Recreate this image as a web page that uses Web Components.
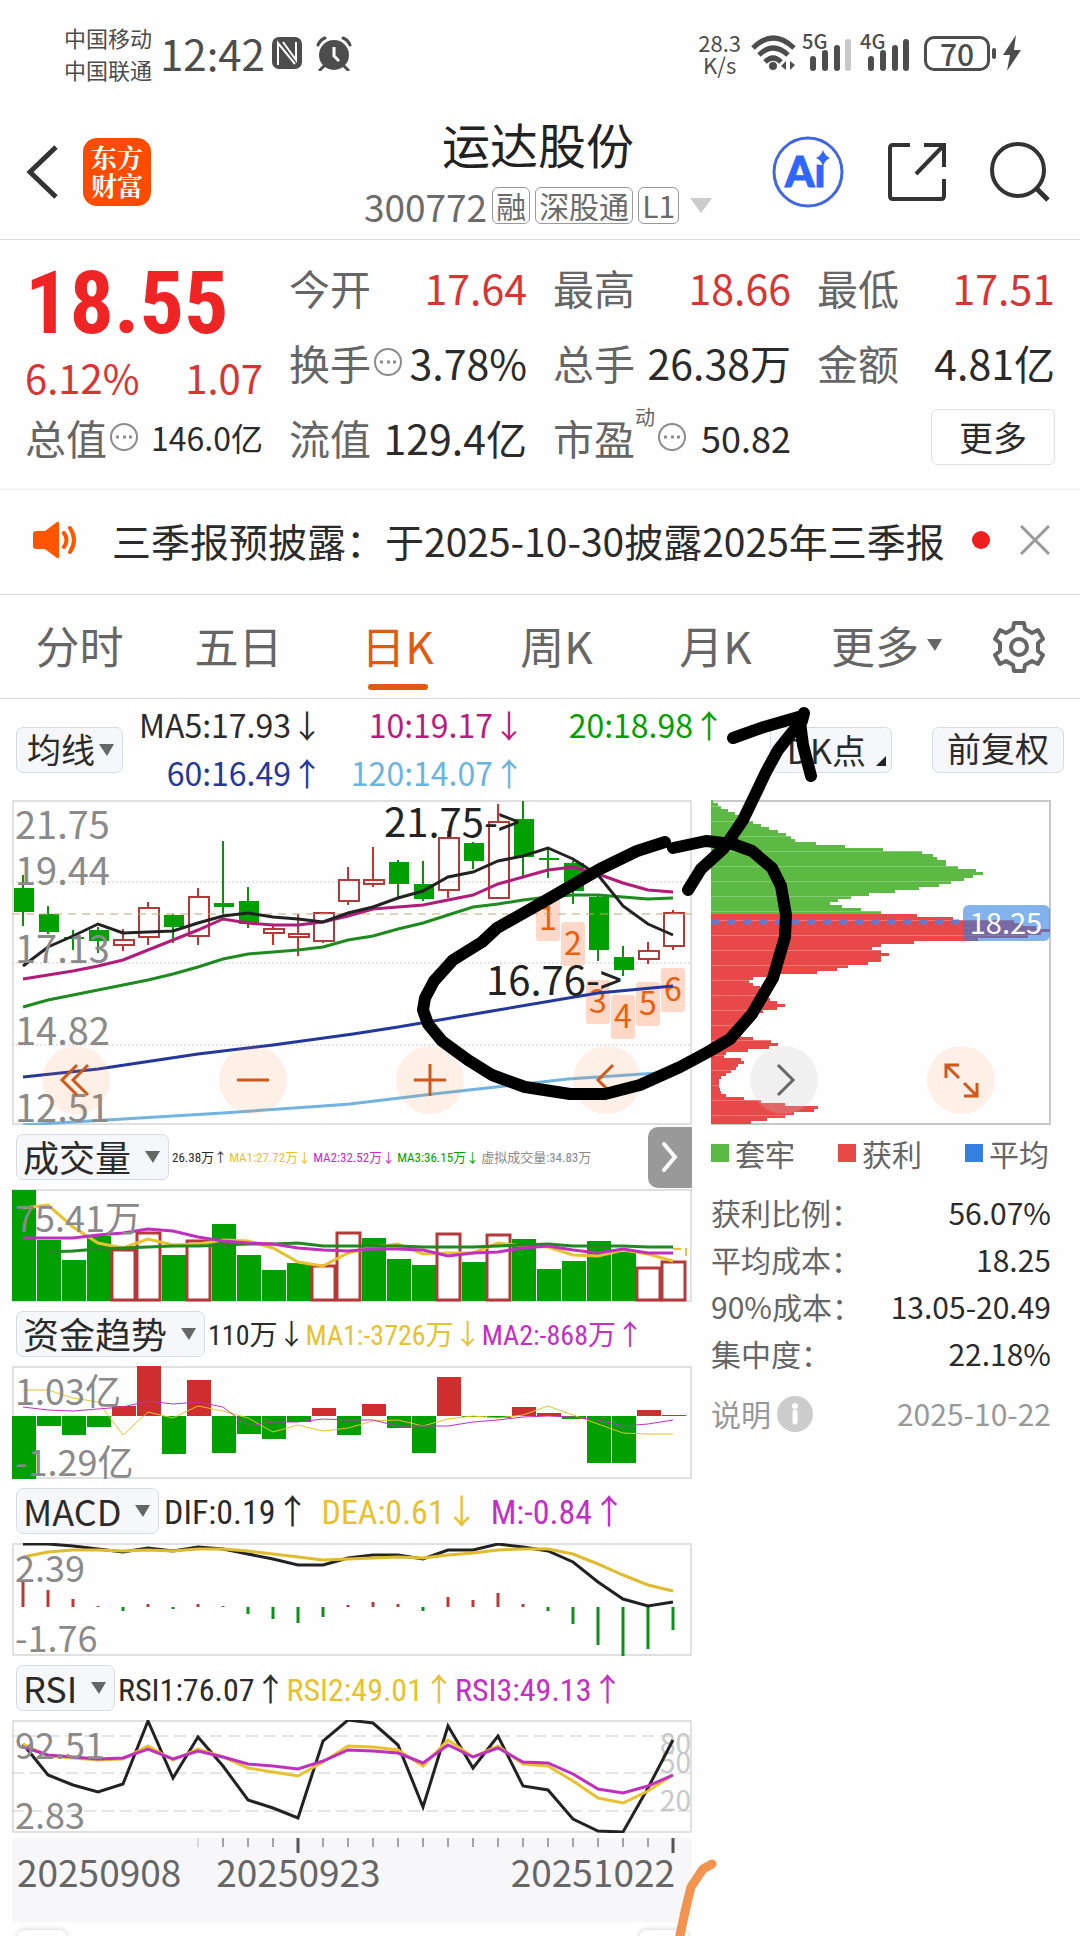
<!DOCTYPE html>
<html lang="zh-CN">
<head>
<meta charset="utf-8">
<meta name="viewport" content="width=device-width, initial-scale=1">
<title>运达股份 300772</title>
<style>
  :root {
    --ink: #2b2b2b;
    --muted: #666;
    --axis: #8a8a8a;
    --line: #d9dcde;
    --red: #d93434;
    --green: #00a000;
    --orange: #e25a10;
    --yellow: #e8c22e;
    --magenta: #c42fc4;
    --chip: #f6f7fa;
  }

  body {
    margin: 0;
    background: #fefefe;
    color: var(--ink);
    font-family: "Noto Sans CJK SC", "Noto Sans", sans-serif;
  }

  main {
    position: relative;
    overflow: hidden;
  }

  .charts {
    position: relative;
    display: grid;
    grid-template-columns: 2fr 1fr;
    column-gap: 19px;
    padding: 0 29px 0 12px;
    align-items: start;
  }
</style>
</head>
<body>
<main>
  <status-bar></status-bar>
  <stock-header></stock-header>
  <quote-panel></quote-panel>
  <notice-bar>三季报预披露：于2025-10-30披露2025年三季报</notice-bar>
  <period-tabs></period-tabs>
  <ma-toolbar></ma-toolbar>
  <div class="charts">
    <div>
      <kline-chart></kline-chart>
      <indicator-panel name="成交量" chart="volume" size="small" more>
        <param-value arrow="↑">26.38万</param-value>
        <param-value arrow="↓" color="yellow">MA1:27.72万</param-value>
        <param-value arrow="↓" color="magenta">MA2:32.52万</param-value>
        <param-value arrow="↓" color="green">MA3:36.15万</param-value>
        <param-value color="axis">虚拟成交量:34.83万</param-value>
      </indicator-panel>
      <indicator-panel name="资金趋势" chart="fund" size="medium">
        <param-value arrow="↓">110万</param-value>
        <param-value arrow="↓" color="yellow">MA1:-3726万</param-value>
        <param-value arrow="↑" color="magenta">MA2:-868万</param-value>
      </indicator-panel>
      <indicator-panel name="MACD" chart="macd" size="large">
        <param-value arrow="↑">DIF:0.19</param-value>
        <param-value arrow="↓" color="yellow">DEA:0.61</param-value>
        <param-value arrow="↑" color="magenta">M:-0.84</param-value>
      </indicator-panel>
      <indicator-panel name="RSI" chart="rsi">
        <param-value arrow="↑">RSI1:76.07</param-value>
        <param-value arrow="↑" color="yellow">RSI2:49.01</param-value>
        <param-value arrow="↑" color="magenta">RSI3:49.13</param-value>
      </indicator-panel>
      <time-axis></time-axis>
    </div>
    <chip-panel></chip-panel>
    <chart-controls></chart-controls>
  </div>
  <hand-sketch></hand-sketch>
</main>

<script>
  class View extends HTMLElement {
    connectedCallback() {
      if (!this.shadowRoot) this.attachShadow({ mode: 'open' });
      this.shadowRoot.innerHTML = this.render();
    }
  }

  // shared by every control that sits on a shadow root of its own
  const reset = `
    button, select {
      font: inherit;
      color: inherit;
      background: none;
      border: 0;
      padding: 0;
      margin: 0;
      appearance: none;
      cursor: pointer;
    }
    svg { display: block; flex: none; }
  `;

  // candle number n is centred on px(n) in a plot that is 680 wide
  const px = (n) => 11 + n * 25;
  const poly = (ys, color, width = 3, from = 0) =>
    `<polyline fill="none" stroke="${color}" stroke-width="${width}" points="${ys.map((y, i) => `${px(i + from)},${y}`).join(' ')}"/>`;
  const path = (pts, color, width = 3) =>
    `<polyline fill="none" stroke="${color}" stroke-width="${width}" points="${pts.map((p) => p.join()).join(' ')}"/>`;

  const GREEN = '#00a000';
  const RED = '#cf2e2e';
  const YELLOW = '#e8c22e';
  const MAGENTA = '#bf30bf';

  customElements.define('status-bar', class extends View {
    render() {
      const bars = (last) => [[0, 15], [12, 21], [24, 26], [35, 32]].map(([x, h], i) =>
        `<rect x="${8 + x}" y="${36 - h}" width="6" height="${h}" rx="3" fill="${i === 3 ? last : '#4d4d4d'}"/>`).join('');
      return `
        <style>
          ${reset}
          :host {
            display: flex;
            align-items: center;
            height: 106px;
            margin-bottom: 2px;
            box-sizing: border-box;
            padding: 0 59px 0 64px;
            color: #4d4d4d;
          }
          .carrier { font-size: 22px; line-height: 32px; }
          .time { font-size: 42px; line-height: 48px; margin: 0 7px 0 8px; }
          .nfc { margin-right: 14px; }
          .speed { margin-left: auto; text-align: center; font-size: 22px; line-height: 22px; margin-right: 10px; }
          .net { display: flex; margin-left: 6px; position: relative; }
          .net span { position: absolute; left: 0; top: -6px; font-size: 20px; line-height: 24px; font-weight: 500; }
          .battery {
            margin-left: 12px;
            width: 60px;
            border: 3px solid;
            border-radius: 10px;
            text-align: center;
            font-size: 30px;
            line-height: 29px;
            font-weight: 500;
          }
          .nub { width: 4px; height: 11px; margin: 0 7px 0 2px; border-radius: 2px; background: currentColor; }
        </style>
        <div class="carrier">中国移动<br>中国联通</div>
        <div class="time">12:42</div>
        <svg class="nfc" width="30" height="32" viewBox="0 0 30 32">
          <rect width="30" height="32" rx="7" fill="#4d4d4d"/>
          <path d="M6 28V6l17 21M11 5l13 18V5" fill="none" stroke="#fff" stroke-width="2"/>
        </svg>
        <svg width="36" height="35" viewBox="0 0 36 35">
          <circle cx="18" cy="19" r="15" fill="#4d4d4d"/>
          <path d="M18 11v9l5 5" fill="none" stroke="#fff" stroke-width="3"/>
          <path d="M2 9q2-5 7-7M34 9q-2-5-7-7M8 30l-4 4M28 30l4 4" fill="none" stroke="#4d4d4d" stroke-width="3" stroke-linecap="round"/>
        </svg>
        <div class="speed">28.3<br>K/s</div>
        <svg width="45" height="36" viewBox="0 0 45 36">
          <g fill="none" stroke="#4d4d4d" stroke-width="5">
            <path d="M2 13q20-20 41 0M8 20q14-14 29 0M14 27q8-8 16 0"/>
          </g>
          <circle cx="22" cy="31" r="4" fill="#4d4d4d"/>
          <path d="M30 31l5-5v9zM44 30l-5-4v9z" fill="#4d4d4d"/>
        </svg>
        <div class="net"><span>5G</span><svg width="52" height="36" viewBox="0 0 52 36">${bars('#c8c8c8')}</svg></div>
        <div class="net"><span>4G</span><svg width="52" height="36" viewBox="0 0 52 36">${bars('#4d4d4d')}</svg></div>
        <div class="battery">70</div>
        <div class="nub"></div>
        <svg width="18" height="36" viewBox="0 0 18 36"><path d="M13 0L0 20h7L4 36l14-21h-7z" fill="#4d4d4d"/></svg>
      `;
    }
  });

  customElements.define('stock-header', class extends View {
    render() {
      return `
        <style>
          ${reset}
          :host {
            display: grid;
            grid-template-columns: 1fr auto 1fr;
            align-items: center;
            height: 127px;
            padding: 0 30px 4px 26px;
            border-bottom: 1px solid var(--line);
          }
          .left, .right, .sub { display: flex; align-items: center; }
          .left { gap: 23px; }
          .right { justify-content: flex-end; gap: 44px; }
          .logo {
            width: 68px;
            height: 68px;
            box-sizing: border-box;
            padding-top: 5px;
            border-radius: 14px;
            background: #ff4b00;
            color: #fff;
            text-align: center;
            font-family: "Noto Serif CJK SC", "Noto Sans CJK SC", sans-serif;
            font-size: 26px;
            line-height: 28px;
            font-weight: 700;
          }
          h1 { margin: 0 0 10px; font-size: 48px; line-height: 60px; font-weight: 400; text-align: center; color: #222; }
          .sub { gap: 5px; font-size: 37px; line-height: 46px; margin-bottom: 2px; color: #6b6b6b; }
          .tag { border: 1px solid #999; border-radius: 6px; padding: 0 3px; font-size: 30px; line-height: 35px; }
          .sub svg { margin-left: 6px; }
        </style>
        <div class="left">
          <button aria-label="返回"><svg width="34" height="56" viewBox="0 0 34 56"><path d="M30 3L4 28l26 25" fill="none" stroke="#333" stroke-width="5"/></svg></button>
          <div class="logo">东方<br>财富</div>
        </div>
        <div>
          <h1>运达股份</h1>
          <div class="sub">
            <span>300772</span><span class="tag">融</span><span class="tag">深股通</span><span class="tag">L1</span>
            <svg width="22" height="15" viewBox="0 0 22 15"><path d="M0 0h22L11 15z" fill="#ccc"/></svg>
          </div>
        </div>
        <div class="right">
          <button aria-label="智能助手">
            <svg width="72" height="72" viewBox="0 0 72 72">
              <circle cx="36" cy="36" r="34" fill="none" stroke="#4066e0" stroke-width="3"/>
              <text x="13" y="51" font-family="Lato, sans-serif" font-size="42" font-weight="900" fill="#2f66ff" stroke="#2f66ff" stroke-width="1">Ai</text>
              <circle cx="50" cy="21" r="8" fill="#fefefe"/>
              <path d="M51 14q2 6 7 8q-5 2-7 8q-2-6-7-8q5-2 7-8z" fill="#2f66ff"/>
            </svg>
          </button>
          <button aria-label="分享">
            <svg width="58" height="58" viewBox="0 0 58 58"><path d="M22 2H5q-3 0-3 3v48q0 3 3 3h48q3 0 3-3V36M36 2h20v22M56 2L28 31" fill="none" stroke="#333" stroke-width="4"/></svg>
          </button>
          <button aria-label="搜索">
            <svg width="60" height="60" viewBox="0 0 60 60"><circle cx="28" cy="28" r="26" fill="none" stroke="#333" stroke-width="4"/><path d="M46 46l12 12" stroke="#333" stroke-width="5"/></svg>
          </button>
        </div>
      `;
    }
  });

  customElements.define('quote-item', class extends View {
    render() {
      const dots = this.hasAttribute('tip')
        ? '<svg width="30" height="30" viewBox="0 0 30 30"><circle cx="15" cy="15" r="13" fill="none" stroke="#8c8c8c" stroke-width="2"/><path d="M7 15h3M14 15h3M20 15h3" stroke="#8c8c8c" stroke-width="3"/></svg>'
        : '';
      const sup = this.getAttribute('sup');
      return `
        <style>
          ${reset}
          :host { display: flex; align-items: center; font-size: 41px; line-height: 60px; white-space: nowrap; }
          sup { font-size: 20px; line-height: 20px; color: var(--muted); align-self: flex-start; }
          svg { margin-left: 2px; }
          .label { color: var(--muted); }
          .value { margin-left: auto; }
          :host([red]) .value { color: var(--red); }
          :host([size="small"]) .value { font-size: 32px; }
          :host([size="mid"]) .value { font-size: 36px; }
        </style>
        <span class="label">${this.getAttribute('label')}</span>${sup ? `<sup>${sup}</sup>` : ''}${dots}
        <span class="value"><slot></slot></span>
      `;
    }
  });

  customElements.define('quote-panel', class extends View {
    render() {
      return `
        <style>
          ${reset}
          :host {
            display: grid;
            grid-template-columns: repeat(4, 1fr);
            grid-template-rows: repeat(3, 60px);
            gap: 15px 26px;
            padding: 17px 25px 22px;
            border-bottom: 1px solid #ececec;
          }
          .price { grid-row: 1 / 3; color: var(--red); }
          .price strong {
            display: block;
            padding-top: 6px;
            font-family: "Roboto Condensed", "Noto Sans CJK SC", sans-serif;
            font-size: 88px;
            line-height: 80px;
            color: #ef2525;
          }
          .price div { display: flex; justify-content: space-between; font-size: 40px; line-height: 68px; }
          .more {
            justify-self: end;
            align-self: center;
            width: 124px;
            height: 56px;
            border: 1px solid #e2e2e2;
            border-radius: 6px;
            font-size: 34px;
            line-height: 50px;
          }
        </style>
        <div class="price"><strong>18.55</strong><div><span>6.12%</span><span>1.07</span></div></div>
        <quote-item label="今开" red>17.64</quote-item>
        <quote-item label="最高" red>18.66</quote-item>
        <quote-item label="最低" red>17.51</quote-item>
        <quote-item label="换手" tip>3.78%</quote-item>
        <quote-item label="总手">26.38万</quote-item>
        <quote-item label="金额">4.81亿</quote-item>
        <quote-item label="总值" tip size="small">146.0亿</quote-item>
        <quote-item label="流值">129.4亿</quote-item>
        <quote-item label="市盈" sup="动" tip size="mid">50.82</quote-item>
        <button class="more">更多</button>
      `;
    }
  });

  customElements.define('notice-bar', class extends View {
    render() {
      return `
        <style>
          ${reset}
          :host {
            display: flex;
            align-items: center;
            height: 100px;
            padding: 0 30px 4px 33px;
            border-bottom: 1px solid var(--line);
            font-size: 39px;
            white-space: nowrap;
          }
          p { margin: 0 0 0 34px; }
          i { width: 18px; height: 18px; border-radius: 50%; background: #f01f1f; margin: 0 30px 0 auto; }
        </style>
        <svg width="45" height="38" viewBox="0 0 45 38">
          <path d="M3 10h9l12-9q2-1 2 1v34q0 2-2 1l-12-9H3q-3 0-3-3V13q0-3 3-3z" fill="#ff5500"/>
          <path d="M31 12q5 7 0 14M37 7q8 12 0 24" fill="none" stroke="#ff5500" stroke-width="4" stroke-linecap="round"/>
        </svg>
        <p><slot></slot></p>
        <i></i>
        <button aria-label="关闭"><svg width="30" height="30" viewBox="0 0 30 30"><path d="M1 1l28 28M29 1L1 29" stroke="#999" stroke-width="3"/></svg></button>
      `;
    }
  });

  customElements.define('period-tabs', class extends View {
    render() {
      const tabs = ['分时', '五日', '日K', '周K', '月K'];
      // six-toothed gear outline
      const gear = [];
      for (let t = 0; t < 6; t++) {
        for (const [d, r] of [[-18, 19], [-12, 25], [12, 25], [18, 19]]) {
          const a = (t * 60 + d - 90) * Math.PI / 180;
          gear.push(`${Math.round(27 + r * Math.cos(a))},${Math.round(27 + r * Math.sin(a))}`);
        }
      }
      return `
        <style>
          ${reset}
          :host {
            display: flex;
            height: 103px;
            padding-right: 20px;
            border-bottom: 1px solid var(--line);
            color: var(--muted);
            font-size: 44px;
          }
          button { flex: 159; display: flex; align-items: center; justify-content: center; position: relative; padding-bottom: 4px; }
          .on { color: var(--orange); }
          .on::after {
            content: "";
            position: absolute;
            bottom: 8px;
            width: 60px;
            height: 6px;
            border-radius: 3px;
            background: var(--orange);
          }
          .more { flex: 183; gap: 8px; }
          .set { flex: 82; padding: 0; }
        </style>
        ${tabs.map((t) => `<button class="${t === '日K' ? 'on' : ''}">${t}</button>`).join('')}
        <button class="more">更多<svg width="15" height="12" viewBox="0 0 15 12"><path d="M0 0h15L8 12z" fill="#666"/></svg></button>
        <button class="set" aria-label="设置">
          <svg width="54" height="54" viewBox="0 0 54 54" fill="none" stroke="#666" stroke-width="4" stroke-linejoin="round">
            <polygon points="${gear.join(' ')}"/><circle cx="27" cy="27" r="8"/>
          </svg>
        </button>
      `;
    }
  });

  customElements.define('drop-down', class extends View {
    render() {
      const name = this.getAttribute('name');
      return `
        <style>
          ${reset}
          :host { display: inline-block; }
          label {
            display: flex;
            align-items: center;
            height: 44px;
            padding: 0 8px 0 var(--drop-pad, 6px);
            border: 1px solid #d8dbe0;
            border-radius: 7px;
            background: var(--chip);
            gap: var(--drop-gap, 13px);
          }
          select { font-size: var(--drop-size, 36px); line-height: 42px; height: 44px; padding-bottom: 2px; outline: 0; }
        </style>
        <label><select aria-label="${name}"><option>${name}</option></select>
        <svg width="15" height="12" viewBox="0 0 15 12"><path d="M0 0h15L8 12z" fill="#666"/></svg></label>
      `;
    }
  });

  customElements.define('param-value', class extends View {
    render() {
      return `
        <style>
          :host { display: inline-block; color: var(--${this.getAttribute('color') || 'ink'}); white-space: nowrap; }
          i { font-family: "Noto Sans CJK SC", sans-serif; font-style: normal; }
        </style>
        <slot></slot><i>${this.getAttribute('arrow') || ''}</i>
      `;
    }
  });

  customElements.define('ma-toolbar', class extends View {
    render() {
      return `
        <style>
          ${reset}
          :host {
            --blue: #24379a;
            --sky: #6cb4e0;
            --pink: #bb1a80;
            display: flex;
            align-items: center;
            height: 101px;
            padding: 0 16px;
          }
          drop-down { --drop-size: 34px; --drop-gap: 4px; --drop-pad: 10px; }
          .values {
            display: grid;
            grid-template-columns: 184px 202px 200px;
            margin: 0 0 4px 16px;
            justify-items: end;
            font-size: 32px;
            line-height: 48px;
          }
          .btn {
            height: 46px;
            border: 1px solid #d8dbe0;
            border-radius: 7px;
            background: var(--chip);
            font-size: 34px;
            line-height: 40px;
            padding: 0 14px 4px;
          }
          .dk { display: flex; align-items: flex-end; margin-left: auto; gap: 10px; padding: 0 5px 2px 16px; }
          .dk svg { margin-bottom: 4px; }
          .fq { margin-left: 40px; }
        </style>
        <drop-down name="均线"></drop-down>
        <div class="values">
          <param-value arrow="↓">MA5:17.93</param-value>
          <param-value arrow="↓" color="pink">10:19.17</param-value>
          <param-value arrow="↑" color="green">20:18.98</param-value>
          <param-value arrow="↑" color="blue">60:16.49</param-value>
          <param-value arrow="↑" color="sky">120:14.07</param-value>
        </div>
        <button class="btn dk">DK点<svg width="10" height="10" viewBox="0 0 10 10"><path d="M10 0v10H0z" fill="#222"/></svg></button>
        <button class="btn fq">前复权</button>
      `;
    }
  });

  const plotStyle = `
    :host { display: block; }
    svg { display: block; width: 100%; height: auto; }
    text { font-family: "Noto Sans CJK SC", "Noto Sans", sans-serif; }
    .axis { fill: #8a8a8a; font-size: 36px; }
  `;

  customElements.define('kline-chart', class extends View {
    // colour, high, body top, body bottom, low
    candles = [
      ['g', 75, 88, 112, 126], ['g', 106, 114, 132, 134], ['g', 130, 137, 139, 150], ['g', 127, 130, 141, 153],
      ['r', 129, 140, 145, 151], ['r', 102, 108, 137, 145], ['g', 114, 115, 127, 143], ['r', 88, 97, 136, 145],
      ['g', 41, 103, 107, 116], ['g', 87, 101, 124, 128], ['r', 125, 129, 133, 145], ['r', 114, 134, 137, 156],
      ['r', 112, 113, 141, 143], ['r', 67, 80, 101, 105], ['r', 47, 80, 84, 87], ['g', 60, 62, 84, 97],
      ['g', 61, 84, 99, 101], ['r', 31, 38, 90, 98], ['g', 42, 43, 61, 69], ['r', 4, 22, 98, 98],
      ['g', 1, 19, 57, 76], ['g', 48, 58, 60, 78], ['g', 61, 63, 91, 104], ['g', 95, 97, 150, 161],
      ['g', 146, 157, 170, 176], ['r', 142, 151, 159, 164], ['r', 110, 113, 146, 150],
    ];

    marks = [[524, 97], [549, 122], [574, 180], [599, 195], [624, 182], [649, 168]];

    candle([c, hi, top, bottom, lo], i) {
      const x = px(i);
      if (c === 'g') {
        return `<path d="M${x} ${hi}V${lo}" stroke="#0a930a" stroke-width="2"/><rect x="${x - 9}" y="${top}" width="20" height="${bottom - top}" fill="${GREEN}"/>`;
      }
      return `<path d="M${x} ${hi}V${top}M${x} ${bottom}V${lo}" stroke="${RED}" stroke-width="2"/><rect x="${x - 9}" y="${top}" width="20" height="${bottom - top}" fill="none" stroke="#b23a3a" stroke-width="2"/>`;
    }

    render() {
      return `
        <style>
          ${plotStyle}
          .axis { font-size: 38px; }
          .note { fill: #222; font-size: 40px; }
          .mark { fill: #e8600f; font-size: 32px; text-anchor: middle; }
        </style>
        <svg viewBox="0 0 680 325">
          <rect x="1" y="1" width="678" height="323" fill="none" stroke="#e0e0e0" stroke-width="2"/>
          <path d="M0 82H680M0 163H680M0 245H680" stroke="#ccc" stroke-dasharray="2 2"/>
          ${this.marks.map(([x, y], i) => `<rect x="${x}" y="${y}" width="24" height="44" rx="3" fill="#ffd8c8"/><text class="mark" x="${x + 12}" y="${y + 33}">${i + 1}</text>`).join('')}
          ${this.candles.map((c, i) => this.candle(c, i)).join('')}
          <path d="M0 114H680" stroke="#c0a878" stroke-dasharray="8 6"/>
          ${path([[11, 277], [86, 269], [186, 254], [261, 245], [341, 234], [386, 227], [486, 210], [586, 193], [661, 186]], '#24379a')}
          ${path([[11, 325], [111, 319], [211, 313], [311, 306], [338, 304], [421, 294], [493, 286], [556, 279], [661, 272]], '#72b4de')}
          ${poly([207, 200, 195, 190, 185, 180, 174, 167, 159, 154, 152, 150, 147, 140, 136, 129, 123, 115, 107, 104, 100, 97, 95, 95, 97, 99, 98], '#1f8a1f')}
          ${poly([179, 175, 171, 166, 160, 150, 140, 130, 119, 123, 125, 125, 122, 116, 109, 107, 105, 100, 95, 84, 77, 70, 67, 74, 83, 90, 92], '#b01c78')}
          ${poly([166, 147, 136, 124, 133, 132, 131, 123, 116, 113, 117, 119, 122, 113, 107, 98, 91, 77, 72, 61, 56, 48, 59, 75, 106, 124, 135], '#222')}
          <text class="axis" x="3" y="39">21.75</text>
          <text class="axis" x="3" y="85">19.44</text>
          <text class="axis" x="3" y="163">17.13</text>
          <text class="axis" x="3" y="245">14.82</text>
          <text class="axis" x="3" y="322">12.51</text>
          <text class="note" x="372" y="37">21.75-&gt;</text>
          <text class="note" x="474" y="195">16.76-&gt;</text>
        </svg>
      `;
    }
  });

  const charts = {
    volume() {
      const bars = ['g1', 'g51', 'g71', 'g47', 'r61', 'r44', 'g66', 'r52', 'g35', 'g66', 'g81', 'g74', 'r77', 'r44',
        'g49', 'g70', 'g76', 'r45', 'g73', 'r46', 'g50', 'g80', 'g72', 'g52', 'g63', 'r79', 'r73'];
      return `
        ${bars.map((b, i) => {
          const y = +b.slice(1);
          return b[0] === 'g'
            ? `<rect x="${i * 25}" y="${y}" width="24" height="${112 - y}" fill="${GREEN}"/>`
            : `<rect x="${i * 25}" y="${y}" width="23" height="${111 - y}" fill="#fff" stroke="#b23a3a" stroke-width="3"/>`;
        }).join('')}
        ${poly([19, 16, 38, 54, 59, 50, 56, 55, 51, 52, 59, 73, 77, 64, 58, 55, 65, 64, 64, 54, 57, 58, 66, 67, 61, 65, 72], YELLOW)}
        <path d="M661 60h13v12" fill="none" stroke="${YELLOW}" stroke-width="2" stroke-dasharray="8 4"/>
        ${poly([63, 62, 60, 59, 58, 57, 57, 56, 55, 55, 54, 57, 57, 57, 57, 58, 58, 58, 57, 56, 55, 57, 57, 57, 58, 58], '#1f8a1f', 3, 1)}
        ${poly([49, 49, 49, 46, 44, 40, 42, 48, 52, 54, 55, 59, 61, 62, 60, 60, 61, 67, 64, 63, 59, 57, 61, 64, 60, 64, 64], MAGENTA)}
        <text class="axis" x="3" y="43">75.41万</text>
      `;
    },
    fund() {
      const ends = [113, 60, 69, 61, 40, 0, 88, 14, 87, 68, 73, 56, 42, 69, 38, 62, 87, 11, 51, 52, 41, 47, 53, 97, 97, 44, 49];
      return `
        ${ends.map((y, i) => `<rect x="${i * 25}" y="${Math.min(y, 50)}" width="24" height="${Math.abs(y - 50)}" fill="${y > 50 ? GREEN : RED}"/>`).join('')}
        ${poly([24, 24, 32, 36, 69, 46, 52, 40, 45, 52, 66, 59, 65, 62, 55, 54, 60, 53, 50, 52, 49, 40, 49, 58, 67, 68, 68], YELLOW, 1)}
        ${poly([41, 44, 45, 43, 41, 35, 38, 36, 41, 60, 56, 56, 53, 54, 54, 60, 60, 60, 56, 54, 51, 50, 51, 54, 60, 58, 54], MAGENTA, 1)}
        <text class="axis" x="3" y="39">1.03亿</text>
        <text class="axis" x="3" y="110">-1.29亿</text>
      `;
    },
    macd() {
      const ends = [39, 47, 56, 63, 68, 61, 66, 61, 63, 71, 76, 80, 74, 62, 59, 61, 68, 54, 57, 50, 61, 68, 81, 102, 113, 106, 87];
      return `
        ${ends.map((y, i) => `<path d="M${px(i)} 64V${y}" stroke="${y > 64 ? '#0f8f1a' : '#b83a3a'}" stroke-width="3"/>`).join('')}
        ${poly([1, 1, 3, 6, 9, 5, 8, 4, 6, 11, 16, 22, 22, 15, 12, 12, 16, 7, 7, 1, 4, 8, 19, 39, 56, 63, 59], '#222')}
        ${poly([14, 9, 7, 7, 8, 7, 8, 6, 6, 8, 11, 14, 17, 16, 15, 14, 15, 12, 10, 7, 6, 6, 11, 21, 32, 42, 48], '#e0bb30')}
        <text class="axis" x="3" y="39">2.39</text>
        <text class="axis" x="3" y="109">-1.76</text>
      `;
    },
    rsi() {
      return `
        <path d="M0 16H680M0 53H680M0 91H680" stroke="#ccc" stroke-dasharray="12 6"/>
        <g fill="#c8c8c8" font-size="28" text-anchor="end">
          <text x="679" y="53">50</text><text x="679" y="34">80</text><text x="679" y="91">20</text>
        </g>
        ${poly([24, 55, 65, 72, 64, 1, 58, 17, 46, 80, 88, 98, 21, 0, 3, 25, 87, 6, 48, 16, 66, 70, 99, 111, 112, 68, 20], '#222')}
        ${poly([24, 36, 38, 40, 39, 26, 40, 29, 37, 48, 52, 56, 42, 26, 27, 30, 46, 20, 37, 26, 44, 46, 61, 78, 83, 71, 55], YELLOW)}
        ${poly([27, 35, 37, 39, 38, 29, 39, 31, 37, 44, 46, 49, 41, 30, 31, 33, 43, 25, 37, 28, 42, 43, 54, 69, 73, 66, 55], MAGENTA)}
        <text class="axis" x="3" y="39">92.51</text>
        <text class="axis" x="3" y="109">2.83</text>
      `;
    },
  };

  customElements.define('indicator-panel', class extends View {
    render() {
      const next = this.hasAttribute('more')
        ? '<button aria-label="更多指标"><svg width="16" height="30" viewBox="0 0 16 30"><path d="M2 2l11 13L2 28" fill="none" stroke="#fff" stroke-width="4" stroke-linecap="round"/></svg></button>'
        : '';
      return `
        <style>
          ${reset}
          ${plotStyle}
          header { display: flex; align-items: center; height: 64px; padding-left: 4px; }
          .params {
            display: flex;
            margin-left: 3px;
            font-family: "Roboto Condensed", "Noto Sans CJK SC", sans-serif;
            font-size: 32px;
            line-height: 44px;
          }
          :host([size="large"]) .params { font-size: 34px; gap: 12px; margin-left: 5px; }
          :host([size="medium"]) .params { font-size: 28px; }
          :host([size="small"]) .params { font-size: 13px; gap: 2px; }
          button {
            display: flex;
            align-items: center;
            justify-content: center;
            margin-left: auto;
            width: 44px;
            height: 61px;
            border-radius: 10px 0 0 10px;
            background: #999;
          }
          button svg { width: 16px; height: 30px; }
        </style>
        <header>
          <drop-down name="${this.getAttribute('name')}"></drop-down>
          <div class="params"><slot></slot></div>${next}
        </header>
        <svg viewBox="0 0 680 113">
          <rect x="1" y="1" width="678" height="111" fill="none" stroke="#e0e0e0" stroke-width="2"/>
          ${charts[this.getAttribute('chart')]()}
        </svg>
      `;
    }
  });

  customElements.define('time-axis', class extends View {
    render() {
      const ticks = [];
      for (let i = 7; i < 27; i++) {
        const major = i === 11 || i === 26;
        ticks.push(`<path d="M${px(i)} 0V${major ? 15 : 9}" stroke="${i === 7 ? '#bbb' : '#555'}" stroke-width="${major ? 3 : 1}"/>`);
      }
      return `
        <style>
          :host { display: block; margin-top: 5px; }
          .band { background: #f7f7f9; height: 84px; }
          svg { display: block; width: 100%; height: auto; }
          .dates { display: flex; padding: 0 17px 0 5px; font-size: 37px; line-height: 36px; color: var(--muted); }
          .dates :nth-child(2) { margin-left: 35px; }
          .dates :nth-child(3) { margin-left: auto; }
          .peek { display: flex; justify-content: space-between; height: 14px; overflow: hidden; padding: 0 3px 0 5px; }
          .peek i { width: 50px; height: 30px; margin-top: 8px; border-radius: 8px; background: #fff; box-shadow: 0 0 5px #ccc; }
        </style>
        <div class="band">
          <svg viewBox="0 0 680 15">${ticks.join('')}</svg>
          <div class="dates"><time>20250908</time><time>20250923</time><time>20251022</time></div>
        </div>
        <div class="peek"><i></i><i></i></div>
      `;
    }
  });

  customElements.define('chip-panel', class extends View {
    // one width per price step, top to bottom
    trapped = [2, 7, 10, 17, 24, 30, 36, 42, 50, 58, 67, 75, 80, 84, 105, 134, 172, 211, 222, 226, 235, 235, 247, 265,
      272, 262, 253, 240, 228, 208, 184, 158, 140, 127, 119, 131, 150, 170];

    profit = [206, 242, 303, 312, 325, 339, 330, 317, 267, 203, 170, 161, 170, 178, 170, 170, 157, 137, 126, 106, 60, 42,
      38, 42, 49, 52, 54, 56, 59, 66, 74, 66, 52, 46, 43, 40, 38, 36, 34, 32, 30, 42, 60, 67, 58, 37, 15, 13, 30, 33,
      27, 25, 20, 15, 10, 8, 8, 8, 9, 10, 15, 33, 50, 74, 107, 103, 83, 74, 56, 40];

    rows(list, start, color) {
      return list.map((w, i) => `<rect y="${(start + i) * 3}" width="${w}" height="3" fill="${color}"/>`
        + (i % 5 === 2 ? `<rect y="${(start + i) * 3}" width="${w}" height="1" fill="#fff" opacity=".25"/>` : '')).join('');
    }

    render() {
      return `
        <style>
          ${plotStyle}
          ul { display: flex; justify-content: space-between; margin: 6px 2px 0 0; padding: 0; list-style: none; font-size: 30px; line-height: 44px; color: var(--muted); }
          li { display: flex; align-items: center; gap: 6px; }
          li::before { content: ""; width: 18px; height: 18px; background: var(--c); }
          table { width: 100%; margin-top: 14px; border-collapse: collapse; }
          th, td { padding: 0; line-height: 47px; white-space: nowrap; font-size: 30px; }
          th { font-weight: 400; text-align: left; color: var(--muted); }
          td { text-align: right; }
          footer { display: flex; align-items: center; margin-top: 13px; font-size: 30px; line-height: 47px; color: #999; }
          footer svg { width: 36px; height: 36px; margin-left: 6px; }
          time { margin-left: auto; }
        </style>
        <svg viewBox="0 0 340 325">
          <path d="M0 1H339V324H0" fill="none" stroke="#c8c8c8" stroke-width="2"/>
          ${this.rows(this.trapped, 0, '#5cba44')}
          ${this.rows(this.profit, 38, '#e84848')}
          <path d="M0 122H252" stroke="#6878c8" stroke-width="5" stroke-dasharray="8 8"/>
          <rect x="252" y="105" width="87" height="36" rx="6" fill="#2f80e0" opacity=".6"/>
          <text x="295" y="134" font-size="29" text-anchor="middle" fill="#fff">18.25</text>
        </svg>
        <ul><li style="--c:#5cba44">套牢</li><li style="--c:#e84848">获利</li><li style="--c:#3480e0">平均</li></ul>
        <table>
          <tr><th>获利比例：</th><td>56.07%</td></tr>
          <tr><th>平均成本：</th><td>18.25</td></tr>
          <tr><th>90%成本：</th><td>13.05-20.49</td></tr>
          <tr><th>集中度：</th><td>22.18%</td></tr>
        </table>
        <footer>说明<svg viewBox="0 0 36 36"><circle cx="18" cy="18" r="18" fill="#ccc"/><circle cx="18" cy="10" r="3" fill="#fff"/><path d="M18 16v10" stroke="#fff" stroke-width="5" stroke-linecap="round"/></svg><time>2025-10-22</time></footer>
      `;
    }
  });

  // round buttons that float over both plots
  customElements.define('chart-controls', class extends View {
    render() {
      const icons = [
        ['最早', 'M35 19L20 34l15 15M46 19L31 34l15 15'],
        ['缩小', 'M18 34h32'],
        ['放大', 'M18 34h32M34 18v32'],
        ['左移', 'M40 19L25 34l15 15'],
        ['右移', 'M28 19l15 15l-15 15'],
        ['全屏', 'M19 32V19h13M19 19l13 13M50 37v13H37M50 50L37 37'],
      ];
      return `
        <style>
          ${reset}
          :host {
            position: absolute;
            top: 246px;
            left: 42px;
            right: 85px;
            display: flex;
            justify-content: space-between;
          }
          button { width: 68px; height: 68px; border-radius: 50%; background: rgba(255, 130, 63, .12); color: #d05818; }
          button:nth-of-type(5) { background: rgba(200, 200, 200, .25); color: #666; }
        </style>
        ${icons.map(([name, d]) => `<button aria-label="${name}"><svg width="68" height="68" viewBox="0 0 68 68"><path d="${d}" fill="none" stroke="currentColor" stroke-width="3"/></svg></button>`).join('')}
      `;
    }
  });

  // freehand strokes drawn over the whole page
  customElements.define('hand-sketch', class extends View {
    render() {
      return `
        <style>
          :host { position: absolute; inset: 0 0 auto; pointer-events: none; }
          svg { display: block; width: 100%; height: auto; }
        </style>
        <svg viewBox="0 0 1080 1936" fill="none" stroke="#000" stroke-width="12" stroke-linecap="round" stroke-linejoin="round">
          <path d="M665 842L637 851L600 869L550 898L497 928L482 942L453 960L434 981L425 998L423 1010L428 1024L442 1041L468 1060L492 1075L525 1087L570 1094L605 1094L640 1085L680 1067L708 1052L730 1039L752 1014L773 978L785 937L786 915L781 886L772 868L752 851L733 844L706 841L673 848"/>
          <path d="M688 890L701 869L724 848L743 820L756 793L766 772L778 750L790 735L802 721L804 713"/>
          <path d="M733 738L764 727L802 716M800 722L803 745L811 776"/>
          <path d="M712 1864L703 1869L691 1887L686 1907L679 1940" stroke="#f2934f" stroke-width="9"/>
        </svg>
      `;
    }
  });
</script>
</body>
</html>
